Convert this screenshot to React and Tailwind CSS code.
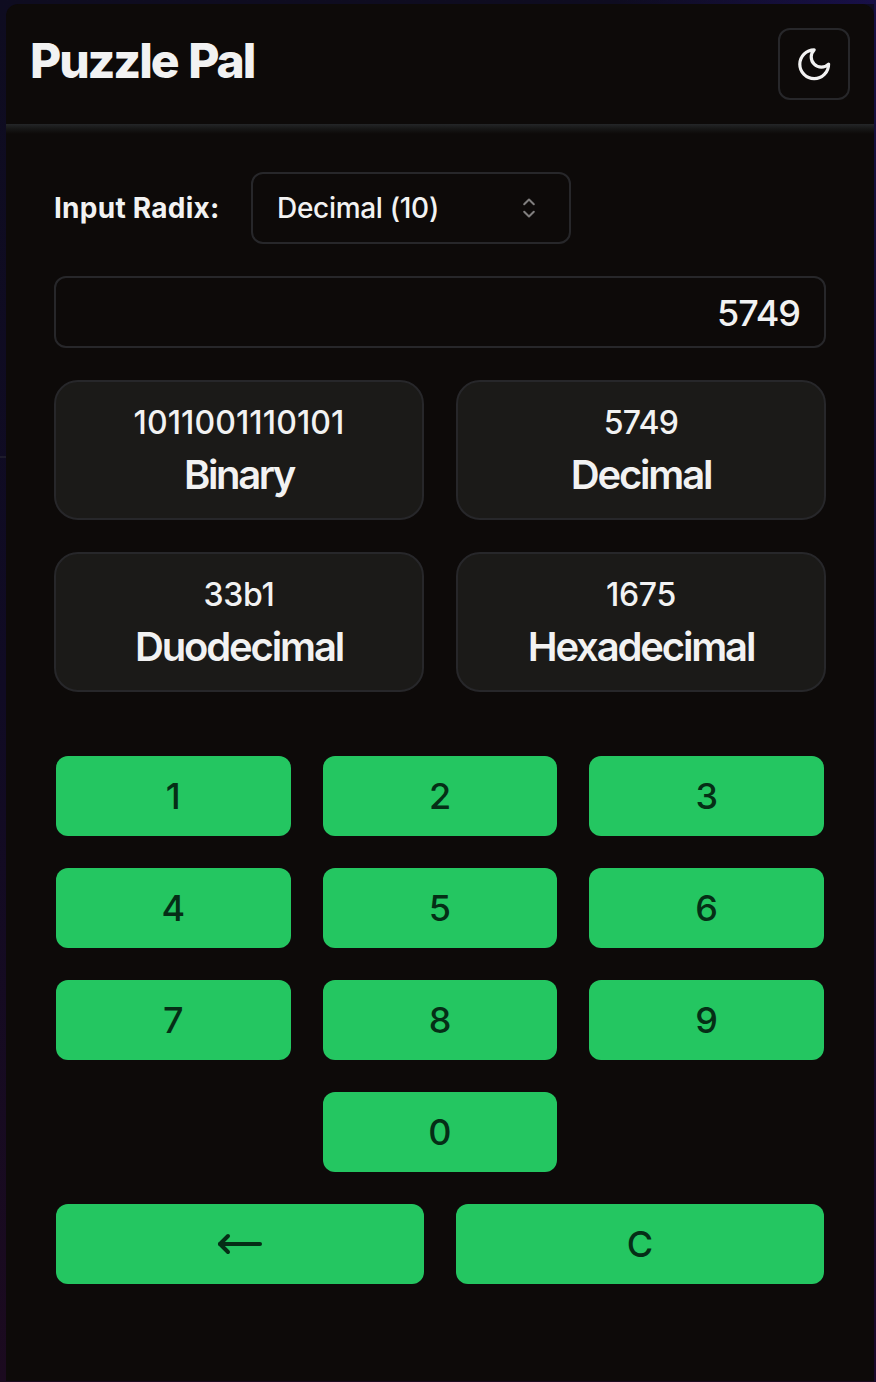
import React from "react";
import { MoveLeft } from "lucide-react";

const keyClass =
  "flex h-20 items-center justify-center rounded-xl bg-[#24c661] text-4xl font-medium text-[#052e16]";

function MoonIcon() {
  return (
    <svg
      viewBox="0 0 24 24"
      fill="none"
      stroke="currentColor"
      strokeWidth="2"
      strokeLinecap="round"
      strokeLinejoin="round"
      className="size-[38.4px]"
    >
      <path d="M12 3a6 6 0 0 0 9 9 9 9 0 1 1-9-9Z" />
    </svg>
  );
}

function CaretSortIcon() {
  return (
    <svg viewBox="0 0 15 15" fill="none" className="size-8 opacity-50">
      <path
        d="M5.25 5.75 7.5 3.5 9.75 5.75M5.25 9.25 7.5 11.5 9.75 9.25"
        stroke="currentColor"
        strokeWidth="0.95"
        strokeLinecap="round"
        strokeLinejoin="round"
      />
    </svg>
  );
}

function ResultCard({ value, label, valueClass = "", labelClass = "tracking-[-2.15px]" }) {
  return (
    <div className="h-[140px] rounded-3xl border-2 border-[#27272a] bg-[#1b1a18] pt-[17px] text-center">
      <p className={`text-[32px] leading-[48px] font-medium ${valueClass}`}>{value}</p>
      <h2 className={`text-[40px] leading-[55px] font-semibold ${labelClass}`}>{label}</h2>
    </div>
  );
}

export default function App() {
  return (
    <div className="relative h-[1382px] w-[876px] overflow-hidden bg-linear-to-b from-[#0e0c20] via-[#100b24] to-[#1b0a1f] pt-1 pr-0.5 pb-px pl-1.5 font-[Inter,'Liberation_Sans',sans-serif] text-[#f2f2f2]">
      <div className="absolute top-0 right-0 h-1 w-[260px] bg-linear-to-r from-transparent to-[#181048]" />
      <div className="absolute top-0 right-0 h-full w-0.5 bg-linear-to-b from-[#171045] via-[#100b24] to-[#1a0a2c]" />
      <div className="absolute top-[456px] left-0 h-0.5 w-1.5 bg-[#1d1b2c]" />

      <div className="relative h-full overflow-hidden rounded-t-xl bg-[#0d0a09]">
        <header className="flex h-[120px] items-center justify-between px-6">
          <h1 className="-mt-[7px] text-5xl leading-[56px] font-extrabold tracking-[-2.1px] [word-spacing:2.5px]">Puzzle Pal</h1>
          <button className="flex size-[72px] items-center justify-center rounded-xl border-2 border-[#27272a]">
            <MoonIcon />
          </button>
        </header>
        <div className="h-2.5 bg-linear-to-b from-[#242628] via-[#161616] to-[#0d0a09]" />

        <main className="px-12 pt-[38px]">
          <div className="flex h-[72px] items-center">
            <label className="w-[197px] text-[28px] font-bold tracking-[0.25px]">Input Radix:</label>
            <button className="flex h-[72px] w-80 items-center justify-between rounded-xl border-2 border-[#27272a] px-6 text-[28px] font-medium tracking-[-0.3px]">
              <span>Decimal (10)</span>
              <CaretSortIcon />
            </button>
          </div>

          <div className="mt-8 flex h-[72px] w-[772px] items-center justify-end rounded-xl border-2 border-[#27272a] pt-0.5 pr-6 text-4xl leading-none font-medium tracking-[-1px]">
            5749
          </div>

          <section className="mt-8 grid w-[772px] grid-cols-2 gap-8">
            <ResultCard value="1011001110101" label="Binary" valueClass="tracking-[0.1px]" labelClass="tracking-[-2.4px]" />
            <ResultCard value="5749" label="Decimal" valueClass="tracking-[-0.7px]" />
            <ResultCard value="33b1" label="Duodecimal" valueClass="tracking-[-0.3px]" />
            <ResultCard value="1675" label="Hexadecimal" valueClass="tracking-[-0.3px]" />
          </section>

          <section className="mt-16 ml-0.5 flex w-[768px] flex-col gap-8">
            <div className="grid grid-cols-3 gap-8">
              {["1", "2", "3", "4", "5", "6", "7", "8", "9"].map((digit) => (
                <button key={digit} className={keyClass}>
                  {digit}
                </button>
              ))}
              <button className={`col-start-2 ${keyClass}`}>0</button>
            </div>
            <div className="grid grid-cols-2 gap-8">
              <button className={keyClass} aria-label="Backspace">
                <MoveLeft className="size-12" strokeWidth={2} />
              </button>
              <button className={keyClass}>C</button>
            </div>
          </section>
        </main>
      </div>
    </div>
  );
}
